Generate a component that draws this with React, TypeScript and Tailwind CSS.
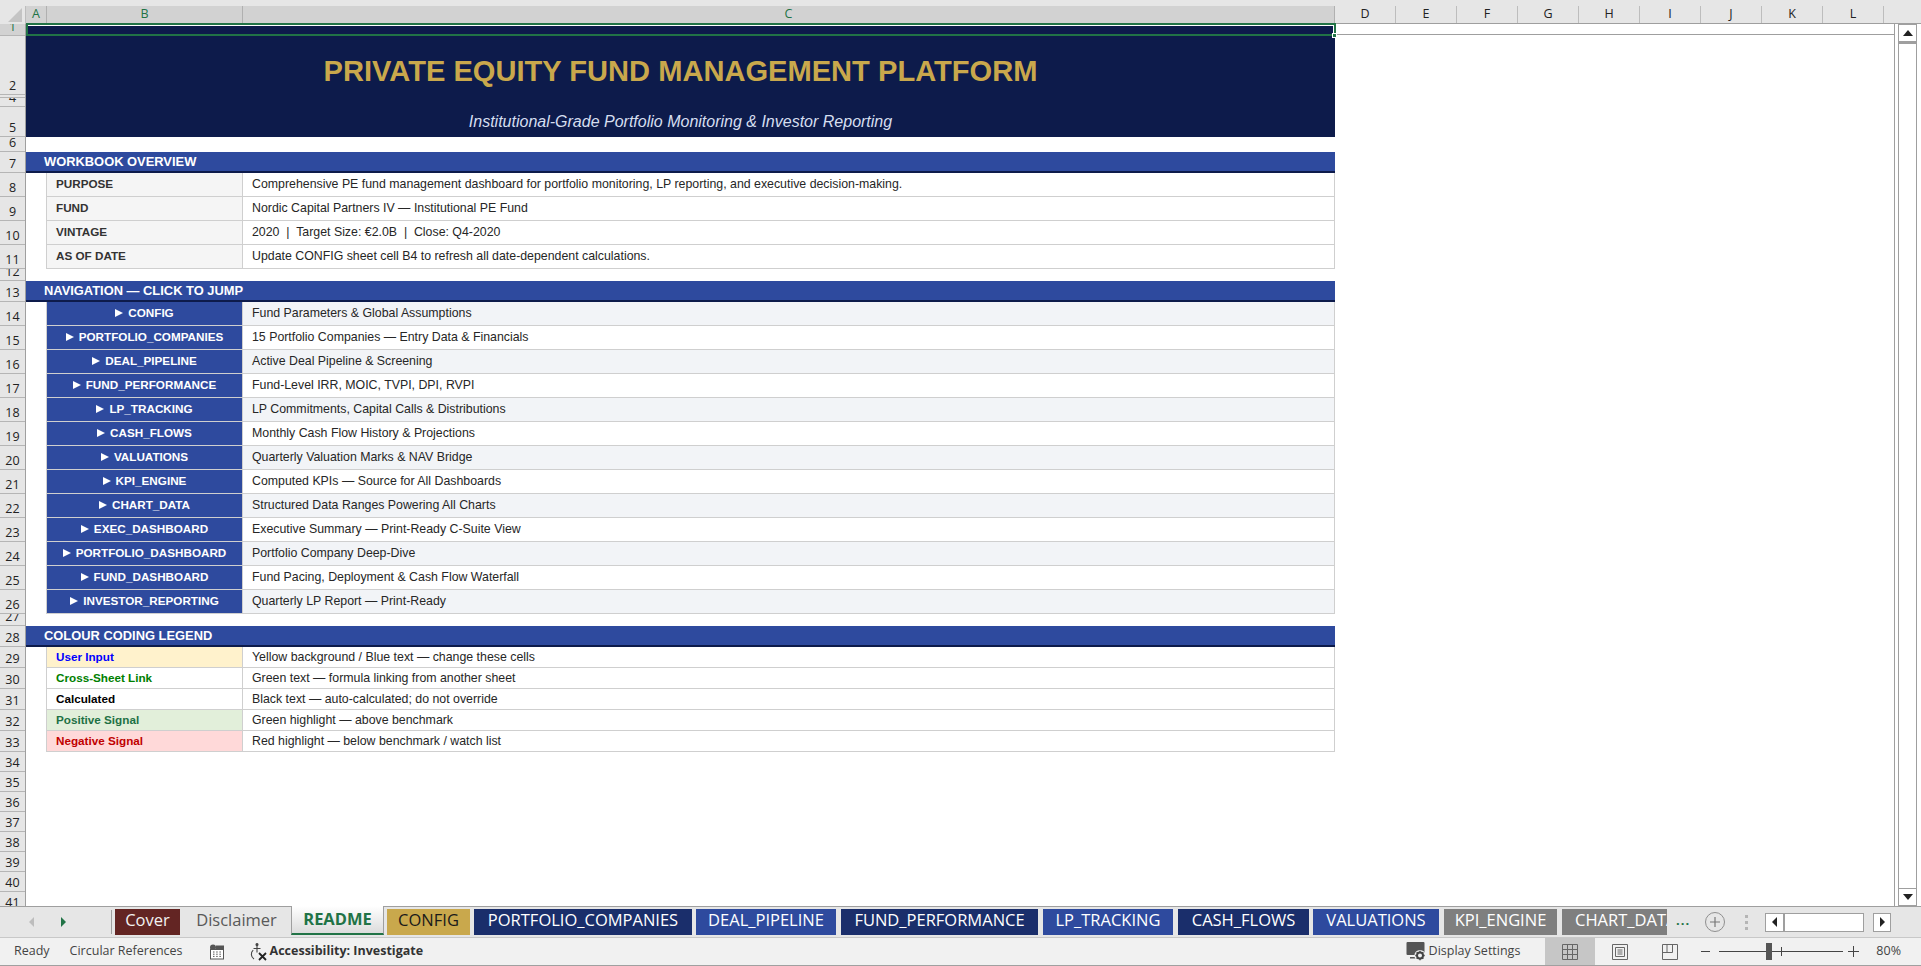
import type { ReactNode } from "react";

const ARIAL = "font-['Liberation_Sans',Arial,sans-serif]";
const UI = "font-['Open_Sans','Noto_Sans',sans-serif]";

const overview = [
  ["PURPOSE", "Comprehensive PE fund management dashboard for portfolio monitoring, LP reporting, and executive decision-making."],
  ["FUND", "Nordic Capital Partners IV — Institutional PE Fund"],
  ["VINTAGE", "2020  |  Target Size: €2.0B  |  Close: Q4-2020"],
  ["AS OF DATE", "Update CONFIG sheet cell B4 to refresh all date-dependent calculations."],
];

const nav = [
  ["CONFIG", "Fund Parameters & Global Assumptions"],
  ["PORTFOLIO_COMPANIES", "15 Portfolio Companies — Entry Data & Financials"],
  ["DEAL_PIPELINE", "Active Deal Pipeline & Screening"],
  ["FUND_PERFORMANCE", "Fund-Level IRR, MOIC, TVPI, DPI, RVPI"],
  ["LP_TRACKING", "LP Commitments, Capital Calls & Distributions"],
  ["CASH_FLOWS", "Monthly Cash Flow History & Projections"],
  ["VALUATIONS", "Quarterly Valuation Marks & NAV Bridge"],
  ["KPI_ENGINE", "Computed KPIs — Source for All Dashboards"],
  ["CHART_DATA", "Structured Data Ranges Powering All Charts"],
  ["EXEC_DASHBOARD", "Executive Summary — Print-Ready C-Suite View"],
  ["PORTFOLIO_DASHBOARD", "Portfolio Company Deep-Dive"],
  ["FUND_DASHBOARD", "Fund Pacing, Deployment & Cash Flow Waterfall"],
  ["INVESTOR_REPORTING", "Quarterly LP Report — Print-Ready"],
];

const legend = [
  ["User Input", "Yellow background / Blue text — change these cells", "bg-[#fff2cc] text-[#0000ff]"],
  ["Cross-Sheet Link", "Green text — formula linking from another sheet", "bg-white text-[#008000]"],
  ["Calculated", "Black text — auto-calculated; do not override", "bg-white text-black"],
  ["Positive Signal", "Green highlight — above benchmark", "bg-[#e2efda] text-[#1e7145]"],
  ["Negative Signal", "Red highlight — below benchmark / watch list", "bg-[#ffd9d9] text-[#c00000]"],
];

// row number column: [label, height]
const rowHeads: [string, string][] = [
  ["1", "h-[12px]"], ["2", "h-[59px]"], ["3", "h-[3px]"], ["4", "h-[9px]"], ["5", "h-[30px]"], ["6", "h-[15px]"],
  ["7", "h-[21px]"], ["8", "h-[24px]"], ["9", "h-[24px]"], ["10", "h-[24px]"], ["11", "h-[24px]"], ["12", "h-[12px]"],
  ["13", "h-[21px]"], ["14", "h-[24px]"], ["15", "h-[24px]"], ["16", "h-[24px]"], ["17", "h-[24px]"], ["18", "h-[24px]"],
  ["19", "h-[24px]"], ["20", "h-[24px]"], ["21", "h-[24px]"], ["22", "h-[24px]"], ["23", "h-[24px]"], ["24", "h-[24px]"],
  ["25", "h-[24px]"], ["26", "h-[24px]"], ["27", "h-[12px]"], ["28", "h-[21px]"], ["29", "h-[21px]"], ["30", "h-[21px]"],
  ["31", "h-[21px]"], ["32", "h-[21px]"], ["33", "h-[21px]"], ["34", "h-[20px]"], ["35", "h-[20px]"], ["36", "h-[20px]"],
  ["37", "h-[20px]"], ["38", "h-[20px]"], ["39", "h-[20px]"], ["40", "h-[20px]"], ["41", "h-[20px]"],
];

const tabs = [
  { name: "Cover", cls: "mr-[3px] w-[65px] bg-[#632523] text-[#f2f2f2]" },
  { name: "Disclaimer", cls: "mr-px w-[107px] text-[#595959]" },
  { name: "README", cls: "mr-[3px] -mt-[3px] w-[93px] border-x border-[#9f9f9f] border-b-2 border-b-[#217346] bg-gradient-to-b from-white to-[#dcdcdc] pt-[3px] font-bold text-[#217346]" },
  { name: "CONFIG", cls: "mr-[4px] w-[83px] bg-[#c9a84c] text-[#1a1a1a]" },
  { name: "PORTFOLIO_COMPANIES", cls: "mr-[4px] w-[218px] bg-[#1a2e6b] text-white" },
  { name: "DEAL_PIPELINE", cls: "mr-[5px] w-[140px] bg-[#2e4a9e] text-white" },
  { name: "FUND_PERFORMANCE", cls: "mr-[5px] w-[197px] bg-[#1a2e6b] text-white" },
  { name: "LP_TRACKING", cls: "mr-[5px] w-[130px] bg-[#2e4a9e] text-white" },
  { name: "CASH_FLOWS", cls: "mr-[4px] w-[131px] bg-[#1a2e6b] text-white" },
  { name: "VALUATIONS", cls: "mr-[5px] w-[126px] bg-[#2e4a9e] text-white" },
  { name: "KPI_ENGINE", cls: "mr-[5px] w-[113px] bg-[#7f7f7f] text-white" },
];

function SectionBar({ title }: { title: string }) {
  return (
    <div className="flex h-[21px] items-center border-b-2 border-[#0d1b4b] bg-[#2e4a9e] pl-[18px] pt-[1px] text-[12.9px] font-bold leading-none text-white">
      {title}
    </div>
  );
}

function TableRow({ height, label, text, labelCls, alt }: { height: string; label: ReactNode; text: string; labelCls: string; alt?: boolean }) {
  return (
    <div className={`ml-[20px] flex border-b border-[#cfcfcf] ${height}`}>
      <div className={`flex w-[197px] shrink-0 items-center border-x border-[#cfcfcf] pb-[1px] text-[11.7px] font-bold ${labelCls}`}>{label}</div>
      <div className={`flex flex-1 items-center whitespace-pre border-r border-[#cfcfcf] pl-[9px] text-[12.35px] text-[#262626] ${alt ? "bg-[#f2f4f7]" : "bg-white"}`}>{text}</div>
    </div>
  );
}

function ColHead({ label, width, active }: { label: string; width: string; active?: boolean }) {
  return (
    <div className={`flex shrink-0 items-center justify-center border-r text-[12.5px] ${width} ${active ? "border-[#b0b0b0] bg-[#d2d2d2] text-[#217346]" : "border-[#bdbdbd] text-[#222]"}`}>
      {label}
    </div>
  );
}

function CalcIcon() {
  return (
    <svg width="16" height="16" viewBox="0 0 16 16" className="text-[#555]">
      <circle cx="4" cy="3.5" r="3" fill="currentColor" />
      <rect x="7" y="1.5" width="8" height="3.5" fill="currentColor" />
      <rect x="1.5" y="5.5" width="13" height="9.5" fill="#fff" stroke="currentColor" />
      <path d="M4 8h1.5M7.2 8h1.5M10.4 8h1.5M4 10.2h1.5M7.2 10.2h1.5M10.4 10.2h1.5M4 12.4h1.5M7.2 12.4h1.5M10.4 12.4h1.5" stroke="currentColor" />
    </svg>
  );
}

function AccessibilityIcon() {
  return (
    <svg width="20" height="20" viewBox="0 0 20 20" fill="none" stroke="#444" strokeWidth="1.1">
      <circle cx="9" cy="2.6" r="1" fill="#444" />
      <path d="M9 4v6.5M5.5 6.5h7" />
      <path d="M5.2 8.2A5.5 5.5 0 0 0 6 17" />
      <path d="M11 11l7 7M18 11l-7 7" stroke="#222" strokeWidth="1.8" />
    </svg>
  );
}

function DisplayIcon() {
  return (
    <svg width="21" height="21" viewBox="0 0 21 21">
      <rect x="0.5" y="1" width="18" height="13" rx="1" fill="#555" />
      <rect x="4" y="16" width="6" height="1.5" fill="#555" />
      <circle cx="14" cy="14.5" r="5.6" fill="#f1f1f1" />
      <circle cx="14" cy="14.5" r="3" fill="none" stroke="#444" strokeWidth="2" />
      <path d="M14 9.8v1.6M14 17.6v1.6M9.3 14.5h1.6M17.1 14.5h1.6M10.7 11.2l1.1 1.1M16.2 16.7l1.1 1.1M10.7 17.8l1.1-1.1M16.2 12.3l1.1-1.1" stroke="#444" strokeWidth="1.4" />
    </svg>
  );
}

export default function App() {
  return (
    <div className="flex h-[966px] w-[1921px] flex-col overflow-hidden bg-[#e6e6e6]">
      {/* column letters */}
      <div className={`flex h-[24px] pt-[6px] ${UI}`}>
        <div className="flex w-[26px] shrink-0 items-end justify-end border-r border-[#bdbdbd] pb-[2px] pr-[3px]">
          <div className="h-0 w-0 border-b-[14px] border-l-[14px] border-b-[#c4c4c4] border-l-transparent" />
        </div>
        <div className="flex flex-1 border-b border-[#9f9f9f]">
          <ColHead label="A" width="w-[21px]" active />
          <ColHead label="B" width="w-[196px]" active />
          <ColHead label="C" width="w-[1092px]" active />
          {["D", "E", "F", "G", "H", "I", "J", "K", "L"].map((c) => (
            <ColHead key={c} label={c} width="w-[61px]" />
          ))}
        </div>
      </div>

      <div className="flex min-h-0 flex-1">
        {/* row numbers */}
        <div className={`w-[26px] shrink-0 overflow-hidden border-r border-[#9f9f9f] ${UI}`}>
          {rowHeads.map(([label, h], i) => (
            <div key={label} className={`flex items-end justify-center overflow-hidden border-b border-[#b5b5b5] text-[12.5px] leading-[16px] text-[#222] ${h} ${i === 0 ? "bg-[#d2d2d2] text-[#217346]" : ""}`}>
              {label}
            </div>
          ))}
        </div>

        {/* sheet */}
        <div className="relative flex min-w-0 flex-1 bg-white">
          <div className={`w-[1309px] shrink-0 ${ARIAL}`}>
            <div className="relative h-[113px] bg-[#0d1b4b]">
              <div className="absolute inset-x-[1px] top-[1px] h-[10px] border border-white" />
              <div className="flex h-[71px] items-end justify-center pb-[4px] pt-[12px] text-[29.1px] font-bold leading-[40px] text-[#c9a84c]">
                PRIVATE EQUITY FUND MANAGEMENT PLATFORM
              </div>
              <div className="flex h-[42px] items-end justify-center pb-[3px] text-[16px] italic text-[#d6dff0]">
                Institutional-Grade Portfolio Monitoring &amp; Investor Reporting
              </div>
            </div>
            <div className="h-[15px]" />
            <SectionBar title="WORKBOOK OVERVIEW" />
            {overview.map(([label, text]) => (
              <TableRow key={label} height="h-[24px]" label={label} text={text} labelCls="bg-[#f5f5f5] pl-[9px] text-[#333]" />
            ))}
            <div className="h-[12px]" />
            <SectionBar title="NAVIGATION — CLICK TO JUMP" />
            {nav.map(([label, text], i) => (
              <TableRow
                key={label}
                height="h-[24px]"
                label={
                  <span className="flex w-full items-center justify-center gap-[5px]">
                    <span className="h-0 w-0 border-y-[4.5px] border-l-[8px] border-y-transparent border-l-white" />
                    {label}
                  </span>
                }
                text={text}
                labelCls="bg-[#2e4a9e] text-white"
                alt={i % 2 === 0}
              />
            ))}
            <div className="h-[12px]" />
            <SectionBar title="COLOUR CODING LEGEND" />
            {legend.map(([label, text, cls]) => (
              <TableRow key={label} height="h-[21px]" label={label} text={text} labelCls={`pl-[9px] ${cls}`} />
            ))}
          </div>
          <div className="flex-1" />
          {/* frozen row line + selection frame */}
          <div className="absolute left-[1309px] right-[26px] top-[10px] h-px bg-[#9f9f9f]" />
          <div className="absolute left-[1309px] right-[26px] top-0 h-[11px] border-r border-[#9f9f9f]" />
          <div className="pointer-events-none absolute left-0 top-[-1px] h-[13px] w-[1310px] border-2 border-[#217346]" />
          <div className="absolute left-[1306px] top-[9px] h-[5px] w-[5px] border border-white bg-[#217346]" />
          <div className="absolute bottom-0 right-[26px] top-0 w-px bg-[#9f9f9f]" />
          {/* vertical scrollbar */}
          <div className="absolute bottom-0 right-[4px] top-0 flex w-[19px] flex-col border-x border-[#9f9f9f] bg-white">
            <div className="flex h-[18px] items-center justify-center border-y border-[#9f9f9f]">
              <div className="h-0 w-0 border-x-[5px] border-b-[6px] border-x-transparent border-b-[#222]" />
            </div>
            <div className="h-[2px] bg-[#9f9f9f]" />
            <div className="flex-1" />
            <div className="flex h-[18px] items-center justify-center border-y border-[#9f9f9f]">
              <div className="h-0 w-0 border-x-[5px] border-t-[6px] border-x-transparent border-t-[#222]" />
            </div>
          </div>
        </div>
      </div>

      {/* sheet tabs */}
      <div className={`flex h-[32px] shrink-0 items-center border-y border-[#9f9f9f] border-b-[#c8c8c8] bg-[#e6e6e6] ${UI}`}>
        <div className="flex h-full w-[112px] shrink-0 items-center border-r-0">
          <div className="ml-[29px] h-0 w-0 border-y-[5px] border-r-[5px] border-y-transparent border-r-[#bdbdbd]" />
          <div className="ml-[27px] h-0 w-0 border-y-[5px] border-l-[5px] border-y-transparent border-l-[#217346]" />
          <div className="ml-auto h-[24px] w-px bg-[#9f9f9f]" />
        </div>
        <div className="ml-[3px] flex h-[26px] items-stretch">
          {tabs.map((t) => (
            <div key={t.name} className={`flex shrink-0 items-center justify-center pb-[3px] text-[16.5px] leading-none ${t.cls}`}>
              {t.name}
            </div>
          ))}
          <div className="flex w-[105px] shrink-0 items-center overflow-hidden bg-[#7f7f7f] pb-[3px] pl-[13px] text-[16.5px] leading-none text-white">
            CHART_DATA
          </div>
        </div>
        <span className="ml-[9px] mb-[2px] text-[13px] font-bold tracking-[1px] text-[#217346]">...</span>
        <div className="ml-[15px] flex h-[20px] w-[20px] items-center justify-center rounded-full border border-[#8f8f8f] text-[#777]">
          <svg width="10" height="10" viewBox="0 0 10 10"><path d="M5 0v10M0 5h10" stroke="currentColor" strokeWidth="1.2" /></svg>
        </div>
        <div className="ml-[20px] flex flex-col gap-[3px]">
          <div className="h-[3px] w-[3px] bg-[#b5b5b5]" />
          <div className="h-[3px] w-[3px] bg-[#b5b5b5]" />
          <div className="h-[3px] w-[3px] bg-[#b5b5b5]" />
        </div>
        <div className="ml-[17px] flex h-[19px] w-[99px] items-center border border-[#9f9f9f] bg-white">
          <div className="flex h-full w-[19px] items-center justify-center border-r-2 border-[#9f9f9f]">
            <div className="h-0 w-0 border-y-[5px] border-r-[5px] border-y-transparent border-r-[#222]" />
          </div>
        </div>
        <div className="ml-[9px] flex h-[19px] w-[18px] items-center justify-center border border-[#9f9f9f] bg-white">
          <div className="h-0 w-0 border-y-[5px] border-l-[5px] border-y-transparent border-l-[#222]" />
        </div>
      </div>

      {/* status bar */}
      <div className={`flex h-[28px] shrink-0 items-center border-b border-[#a0a0a0] bg-[#f1f1f1] text-[12.5px] text-[#444] ${UI}`}>
        <span className="ml-[14px]">Ready</span>
        <span className="ml-[20px]">Circular References</span>
        <span className="ml-[26px]"><CalcIcon /></span>
        <span className="ml-[23px]"><AccessibilityIcon /></span>
        <span className="ml-[2px] font-bold text-[#333]">Accessibility: Investigate</span>
        <div className="flex-1" />
        <DisplayIcon />
        <span className="ml-[2px]">Display Settings</span>
        <div className="ml-[25px] flex h-full w-[50px] items-center justify-center bg-[#c6c6c6]">
          <svg width="16" height="16" viewBox="0 0 16 16" fill="none" stroke="#666"><path d="M.5.5h15v15H.5zM5.5.5v15M10.5.5v15M.5 5.5h15M.5 10.5h15" /></svg>
        </div>
        <div className="flex w-[50px] items-center justify-center">
          <svg width="16" height="16" viewBox="0 0 16 16" fill="none" stroke="#666"><path d="M.5.5h15v15H.5zM3.5 3.5h9v9h-9zM5.5 6h5M5.5 8h5M5.5 10h5" /></svg>
        </div>
        <div className="flex w-[50px] items-center justify-center">
          <svg width="16" height="16" viewBox="0 0 16 16" fill="none" stroke="#666"><path d="M.5.5h15v15H.5zM5 .5v8M10.5.5v8M.5 8.5h10" /></svg>
        </div>
        <div className="ml-[6px] h-px w-[9px] bg-[#444]" />
        <div className="relative ml-[9px] h-px w-[124px] bg-[#444]">
          <div className="absolute left-[47px] top-[-8px] h-[17px] w-[6px] bg-[#555]" />
          <div className="absolute left-[62px] top-[-4px] h-[9px] w-px bg-[#444]" />
        </div>
        <svg className="ml-[5px]" width="11" height="11" viewBox="0 0 11 11"><path d="M5.5 0v11M0 5.5h11" stroke="#444" /></svg>
        <span className="ml-[17px] mr-[20px]">80%</span>
      </div>
    </div>
  );
}
